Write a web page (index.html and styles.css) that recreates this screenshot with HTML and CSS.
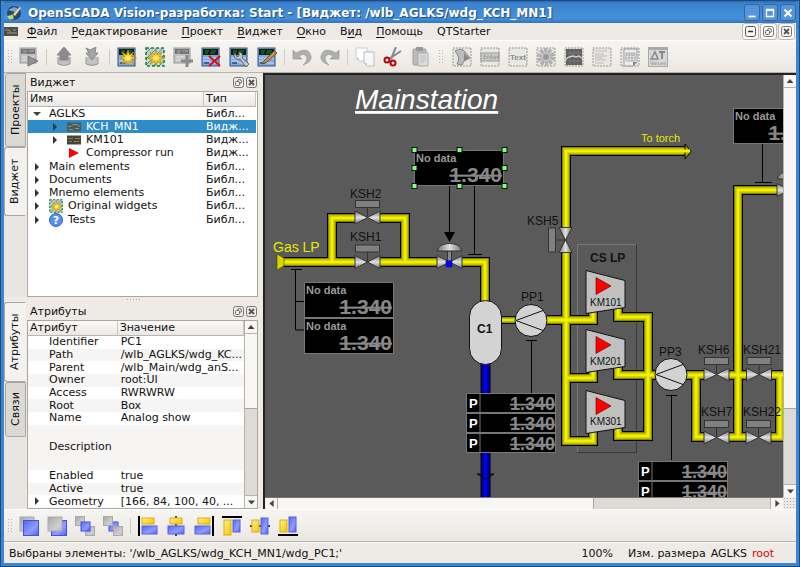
FILE: index.html
```
<!DOCTYPE html>
<html lang="ru">
<head>
  <meta charset="UTF-8">
  <meta name="viewport" content="width=device-width, initial-scale=1">
  <title>OpenSCADA Vision-разработка</title>
  <link rel="stylesheet" href="styles.css">
</head>
<body>

<svg class="defs" aria-hidden="true">
  <defs>
    <linearGradient id="metal" x1="0" y1="0" x2="0" y2="1">
      <stop offset="0" stop-color="#777"/><stop offset=".5" stop-color="#e0e0e0"/><stop offset="1" stop-color="#777"/>
    </linearGradient>
    <linearGradient id="metal-v" x1="0" y1="0" x2="1" y2="0">
      <stop offset="0" stop-color="#777"/><stop offset=".5" stop-color="#e0e0e0"/><stop offset="1" stop-color="#777"/>
    </linearGradient>
    <linearGradient id="gold" x1="0" y1="0" x2="1" y2="1">
      <stop offset="0" stop-color="#fff09a"/><stop offset="1" stop-color="#f5c400"/>
    </linearGradient>
    <linearGradient id="blue" x1="0" y1="0" x2="1" y2="1">
      <stop offset="0" stop-color="#5568f0"/><stop offset=".6" stop-color="#8f9cff"/><stop offset="1" stop-color="#5060ee"/>
    </linearGradient>
    <linearGradient id="silver" x1="0" y1="0" x2="1" y2="1">
      <stop offset="0" stop-color="#a9a9a9"/><stop offset=".7" stop-color="#cfcfcf"/><stop offset="1" stop-color="#b5b5b5"/>
    </linearGradient>
    <symbol id="panel" viewBox="0 0 20 20">
      <rect x="1" y="1" width="17" height="18" fill="#7fa8e4" stroke="#38507c"/>
      <rect x="2" y="2" width="15" height="6" fill="#10200f"/>
      <path d="M4 4h4M10 4h5M4 6h3M9 6h5" stroke="#1c8a25"/>
      <path d="M2 11h15M2 14h6l3 2h6" stroke="#c7dcfb" fill="none"/>
      <path d="M3 16h5" stroke="#46608c" stroke-width="2"/>
    </symbol>
    <symbol id="panel-off" viewBox="0 0 20 20">
      <rect x="1" y="1" width="16" height="15" fill="#c3c3c3" stroke="#999"/>
      <rect x="2" y="2" width="14" height="5" fill="#777"/>
      <path d="M4 4h4M10 4h5M4 6h3" stroke="#aaa"/>
      <path d="M3 10h12M3 13h12" stroke="#e5e5e5"/>
    </symbol>
    <symbol id="star" viewBox="0 0 20 20">
      <path d="M11 3l1.500 5 4-3-2 4.500 5 1.500-5 1.500 2 4.500-4-3-1.500 5-1.500-5-4.500 3 2.500-4.500-5-1.500 5-1.500-2.500-4.500 4.500 3z" fill="#ffd528" stroke="#bd8500" stroke-width=".8"/>
      <circle cx="11" cy="11" r="2" fill="#fff3a0"/>
    </symbol>
    <symbol id="library" viewBox="0 0 20 20">
      <rect x="1" y="1" width="18" height="18" fill="#b9d3d6"/>
      <path d="M1 6l5-5M1 12l11-11M1 18l17-17M8 19l11-11M14 19l5-5" stroke="#6b8b90"/>
      <rect x="1" y="1" width="18" height="18" fill="none" stroke="#19862a" stroke-width="1.600" stroke-dasharray="3 2"/>
      <use href="#star"/>
    </symbol>
    <symbol id="frame" viewBox="0 0 20 20">
      <rect x="1" y="1" width="18" height="18" fill="#e9e7e4" stroke="#999" stroke-dasharray="2 1"/>
    </symbol>
    <symbol id="float" viewBox="0 0 11 11">
      <rect x=".5" y=".5" width="10" height="10" rx="2" fill="none" stroke="#777"/>
      <circle cx="6.500" cy="4.500" r="2" fill="none" stroke="#666"/>
      <rect x="2.500" y="4.500" width="4" height="4" rx="1" fill="#eee" stroke="#666"/>
    </symbol>
    <symbol id="close" viewBox="0 0 11 11">
      <rect x=".5" y=".5" width="10" height="10" rx="2" fill="none" stroke="#777"/>
      <path d="M3 3l5 5M8 3l-5 5" stroke="#555" stroke-width="1.800"/>
    </symbol>
    <symbol id="open" viewBox="0 0 8 8"><path d="M0 2h8L4 6z" fill="#444"/></symbol>
    <symbol id="shut" viewBox="0 0 8 8"><path d="M2 0v8l4-4z" fill="#333"/></symbol>

    <!-- mnemo elements, origin in the middle of each -->
    <g id="bowtie" stroke="#333" stroke-width="1">
      <path d="M-12.500-6.500L0 0-12.500 6.500z" fill="url(#metal)"/>
      <path d="M12.500-6.500L0 0 12.500 6.500z" fill="url(#metal)"/>
    </g>
    <g id="valve">
      <path d="M0-10V0" stroke="#333"/>
      <rect x="-12" y="-17" width="24" height="7" fill="#808080" stroke="#333"/>
      <use href="#bowtie"/>
    </g>
    <g id="control-valve">
      <rect x="-2" y="-11" width="4" height="10" fill="#888" stroke="#333"/>
      <path d="M-12-11C-12-21 12-21 12-11z" fill="url(#metal-v)" stroke="#333"/>
      <use href="#bowtie"/>
    </g>
    <g id="pump">
      <circle r="16" fill="#d3d3d3" stroke="#111"/>
      <path d="M12-10L-15 0 12 10" fill="none" stroke="#111"/>
    </g>
    <g id="compressor">
      <path d="M0 0L39 10V37L0 43z" fill="#c0c0c0" stroke="#111"/>
      <path d="M10 7L25 15.500 10 24z" fill="red" stroke="#500" stroke-width=".6"/>
    </g>
    <g id="display">
      <rect x=".5" y=".5" width="89" height="35" fill="#000" stroke="#777"/>
      <text class="tag" x="2" y="12">No data</text>
      <text class="value" x="88" y="32">1.340</text>
    </g>
    <g id="channel">
      <rect x=".5" y=".5" width="89" height="19" fill="#000" stroke="#777"/>
      <path d="M14 0v20" stroke="#777"/>
      <text class="param" x="3" y="15">P</text>
      <text class="value small" x="89" y="17">1.340</text>
    </g>
    <rect id="handle" x="-2.500" y="-2.500" width="5" height="5" fill="#80ff80" stroke="#111"/>
    <path id="gas" fill="none" d="M280 262H355M380 262H438M332 262V218H355M380 218H405V262M462 262H485V301
      M547 320H593V312M566 228V151H686M566 252V441H593V430M566 378H593V369
      M618 308V317H648V436H618V427M618 366V375H656M686 375H704M696 375V437H704
      M729 375H747M729 437H747M738 437V190H778M771 375H790M771 437H780V375"/>
  </defs>
</svg>

<div class="window">
  <header class="titlebar">
    <svg class="app-icon" viewBox="0 0 16 16"><circle cx="8" cy="8" r="7" fill="#294766"/><path d="M2 5l6-3 5 2-4 3z" fill="#7ca6d0"/><path d="M3 13l3-4 2 2-3 4z" fill="#8acb3c"/><path d="M7 9l7-7 1 1-6 8z" fill="#f0d7a0"/><path d="M1 11l5-1 2 4H3z" fill="#c6dc6a"/></svg>
    <h1>OpenSCADA Vision-разработка: Start - [Виджет: /wlb_AGLKS/wdg_KCH_MN1]</h1>
    <button class="wm" aria-label="Свернуть"><svg viewBox="0 0 16 16"><path d="M4 12h8" stroke="#fff" stroke-width="2"/></svg></button>
    <button class="wm" aria-label="Развернуть"><svg viewBox="0 0 16 16"><path d="M4 4h8v8H4zM4 5h8" stroke="#fff" stroke-width="1.500" fill="none"/></svg></button>
    <button class="wm" aria-label="Закрыть"><svg viewBox="0 0 16 16"><path d="M4 4l8 8M12 4l-8 8" stroke="#fff" stroke-width="2.200"/></svg></button>
  </header>

  <nav class="menubar">
    <svg class="doc-icon" viewBox="0 0 14 9"><rect width="14" height="9" fill="#4a4d48"/><path d="M1 3h4l2 3h6M3 6h3M9 3h3" stroke="#a0a06a" fill="none"/></svg>
    <button><u>Ф</u>айл</button>
    <button><u>Р</u>едактирование</button>
    <button><u>П</u>роект</button>
    <button><u>В</u>иджет</button>
    <button><u>О</u>кно</button>
    <button>В<u>и</u>д</button>
    <button><u>П</u>омощь</button>
    <button>QTStarter</button>
    <span class="mdi">
      <button aria-label="Свернуть виджет"><svg viewBox="0 0 11 11"><rect x=".5" y=".5" width="10" height="10" rx="2" fill="none" stroke="#555"/><path d="M3 5.500h5" stroke="#333" stroke-width="1.500"/></svg></button>
      <button aria-label="Восстановить виджет"><svg><use href="#float"/></svg></button>
      <button aria-label="Закрыть виджет"><svg><use href="#close"/></svg></button>
    </span>
  </nav>

  <div class="toolbar top">
    <span class="grip"></span>
    <button aria-label="Исполнение"><svg viewBox="0 0 20 20"><use href="#panel-off"/><path d="M9 9l10 5-10 5z" fill="#929292" stroke="#777"/></svg></button>
    <span class="sep"></span>
    <button aria-label="Загрузить"><svg viewBox="0 0 20 20"><path d="M4 10v7q6 3 12 0v-7" fill="#c2c2c2" stroke="#999"/><path d="M10 0l7 8h-3v5H6V8H3z" fill="#8b8b8b" stroke="#888"/></svg></button>
    <button aria-label="Сохранить"><svg viewBox="0 0 20 20"><path d="M4 10v7q6 3 12 0v-7" fill="#c2c2c2" stroke="#999"/><path d="M4 1l4 2 6-3-1 6h3l-6 7-6-7h3z" fill="#a5a5a5" stroke="#888"/></svg></button>
    <span class="sep"></span>
    <button aria-label="Новая библиотека"><svg viewBox="0 0 20 20"><use href="#panel"/><use href="#star"/></svg></button>
    <button aria-label="Добавить библиотеку"><svg><use href="#library"/></svg></button>
    <button aria-label="Добавить виджет"><svg viewBox="0 0 20 20"><use href="#panel-off"/><path d="M14 8v12M8 14h12" stroke="#8a8a8a" stroke-width="3"/></svg></button>
    <button aria-label="Удалить виджет"><svg viewBox="0 0 20 20"><use href="#panel"/><path d="M8 9l11 10M19 9L8 19" stroke="#d90f0f" stroke-width="2"/></svg></button>
    <button aria-label="Свойства"><svg viewBox="0 0 20 20"><use href="#panel"/><path d="M6 6a4 4 0 0 0 5 6l6 8 3-3-7-6a4 4 0 0 0-3-6v4l-2 1z" fill="#c6c9cd" stroke="#666"/></svg></button>
    <button aria-label="Редактировать"><svg viewBox="0 0 20 20"><use href="#panel"/><path d="M6 15l11-11 3 2-10 9-5 2z" fill="#c78e4c" stroke="#704c22"/></svg></button>
    <span class="sep"></span>
    <button aria-label="Отменить"><svg viewBox="0 0 20 20"><path d="M1 3v9h9L7 9q6-4 8 2 0 4-4 7 9-3 8-9Q16-1 4 6z" fill="#b0b0b0" stroke="#999" stroke-width=".7"/></svg></button>
    <button aria-label="Повторить"><svg viewBox="0 0 20 20"><path d="M19 3v9h-9l3-3q-6-4-8 2 0 4 4 7-9-3-8-9Q4-1 16 6z" fill="#b0b0b0" stroke="#999" stroke-width=".7"/></svg></button>
    <span class="sep"></span>
    <button aria-label="Копировать"><svg viewBox="0 0 20 20"><path d="M1 1h11v13H4l-3-3z" fill="#fff" stroke="#ccc"/><path d="M9 5h10v14h-7l-3-3z" fill="#f8f8fa" stroke="#bbb"/><path d="M1 11l3 3v-3zM9 16l3 3v-3z" fill="#c8c8d4"/></svg></button>
    <button aria-label="Вырезать"><svg viewBox="0 0 20 20"><path d="M13 0L8 12M18 4L6 12" stroke="#888" stroke-width="2"/><circle cx="4" cy="13" r="2.500" fill="none" stroke="#c3000a" stroke-width="2"/><circle cx="10" cy="16" r="2.500" fill="none" stroke="#c3000a" stroke-width="2"/></svg></button>
    <button aria-label="Вставить"><svg viewBox="0 0 20 20"><rect x="2" y="2" width="13" height="16" rx="1" fill="#bbb" stroke="#a0a0a0"/><rect x="5" y="0" width="7" height="4" fill="#999"/><path d="M7 6h10v13H7z" fill="#ddd" stroke="#aaa"/><path d="M9 9h6M9 11h6M9 13h6M9 15h4" stroke="#bbb"/></svg></button>
    <span class="grip"></span>
    <button aria-label="Элементарная фигура"><svg viewBox="0 0 20 20"><use href="#frame"/><path d="M3 4q7-4 10 1l5 6-6 3-2 4-5-1q4-6-2-13z" fill="#bbb" stroke="#888"/><path d="M12 6l5 5-5 3z" fill="#888"/></svg></button>
    <button aria-label="Элемент формы"><svg viewBox="0 0 20 20"><use href="#frame"/><rect x="1" y="6" width="18" height="8" fill="#ccc" stroke="#999"/><text class="glyph" x="3" y="12">Enter</text></svg></button>
    <button aria-label="Текст"><svg viewBox="0 0 20 20"><use href="#frame"/><text class="glyph big" x="2" y="13">Text</text></svg></button>
    <button aria-label="Медиа"><svg viewBox="0 0 20 20"><use href="#frame"/><circle cx="10" cy="10" r="6.500" fill="#ccc" stroke="#b0b0b0" stroke-width="5" stroke-dasharray="3 1"/><circle cx="10" cy="10" r="3" fill="#999"/></svg></button>
    <button aria-label="Диаграмма"><svg viewBox="0 0 20 20"><use href="#frame"/><rect x="2" y="2" width="16" height="16" fill="#5e5e5e"/><path d="M6 2v16M10 2v16M14 2v16M2 6h16M2 14h16" stroke="#777"/><path d="M1 13l4-3 4-1 3 1 3-1 4 3" fill="none" stroke="#ccc" stroke-width="1.500"/></svg></button>
    <button aria-label="Протокол"><svg viewBox="0 0 20 20"><use href="#frame"/><path d="M3 4h12M3 7h9M3 9h12M3 11h8M3 13h11M3 16h9" stroke="#bbb"/></svg></button>
    <button aria-label="Документ"><svg viewBox="0 0 20 20"><use href="#frame"/><path d="M4 2h13v13l-4 4H4z" fill="#eee" stroke="#999"/><path d="M6 6h9v8H6zM6 8h9M6 11h9M9 6v8M12 6v8" fill="none" stroke="#aaa"/><path d="M13 19v-4h4z" fill="#888"/></svg></button>
    <button aria-label="Значение"><svg viewBox="0 0 20 20"><rect x=".5" y=".5" width="19" height="19" fill="#d8d8d8" stroke="#aaa"/><path d="M1 2h18" stroke="#aaa" stroke-width="2"/><path d="M3 12l4-7 3 7z" fill="none" stroke="#888" stroke-width="1.500"/><path d="M11 5h6M14 5v7" stroke="#888" stroke-width="2"/><text class="glyph tiny" x="2" y="18">Values</text></svg></button>
  </div>

  <main class="workspace">
    <aside class="docks">
      <section class="dock widgets">
        <div class="tabs" role="tablist">
          <button class="tab projects" role="tab" aria-selected="false">Проекты</button>
          <button class="tab lib active" role="tab" aria-selected="true">Виджет</button>
        </div>
        <div class="pane">
          <div class="pane-title">
            <h2>Виджет</h2>
            <button aria-label="Открепить"><svg><use href="#float"/></svg></button>
            <button aria-label="Закрыть панель"><svg><use href="#close"/></svg></button>
          </div>
          <div class="view">
            <table class="tree">
              <thead><tr><th>Имя</th><th class="type">Тип</th></tr></thead>
              <tbody>
                <tr><td><svg class="twist"><use href="#open"/></svg>AGLKS</td><td>Библ...</td></tr>
                <tr class="selected"><td class="child"><svg class="twist"><use href="#shut"/></svg><svg class="thumb" viewBox="0 0 14 9"><rect width="14" height="9" fill="#4e5a58"/><path d="M1 4h3l2-2h4l3 2M2 7h4M8 6h4" stroke="#7e9a88" fill="none"/></svg>KCH_MN1</td><td>Видж...</td></tr>
                <tr><td class="child"><svg class="twist"><use href="#shut"/></svg><svg class="thumb" viewBox="0 0 14 9"><rect width="14" height="9" fill="#44443c"/><path d="M1 3h5M8 3h5M2 6h3M7 6h5" stroke="#8b7f3c" fill="none"/></svg>KM101</td><td>Видж...</td></tr>
                <tr class="tall"><td class="child"><span class="twist"></span><svg class="thumb" viewBox="0 0 14 12"><path d="M2 1l10 5-10 5z" fill="red"/></svg>Compressor run</td><td>Видж...</td></tr>
                <tr><td><svg class="twist"><use href="#shut"/></svg>Main elements</td><td>Библ...</td></tr>
                <tr><td><svg class="twist"><use href="#shut"/></svg>Documents</td><td>Библ...</td></tr>
                <tr><td><svg class="twist"><use href="#shut"/></svg>Mnemo elements</td><td>Библ...</td></tr>
                <tr class="tall"><td><svg class="twist"><use href="#shut"/></svg><svg class="thumb"><use href="#library"/></svg>Original widgets</td><td>Библ...</td></tr>
                <tr class="tall"><td><svg class="twist"><use href="#shut"/></svg><svg class="thumb" viewBox="0 0 14 14"><circle cx="7" cy="7" r="6.500" fill="#5a8df0" stroke="#2b5fd0"/><text class="help" x="7" y="11">?</text></svg>Tests</td><td>Библ...</td></tr>
              </tbody>
            </table>
          </div>
        </div>
      </section>

      <div class="splitter"></div>

      <section class="dock attrs">
        <div class="tabs" role="tablist">
          <button class="tab attributes active" role="tab" aria-selected="true">Атрибуты</button>
          <button class="tab links" role="tab" aria-selected="false">Связи</button>
        </div>
        <div class="pane">
          <div class="pane-title">
            <h2>Атрибуты</h2>
            <button aria-label="Открепить"><svg><use href="#float"/></svg></button>
            <button aria-label="Закрыть панель"><svg><use href="#close"/></svg></button>
          </div>
          <div class="view scrolled">
            <table class="props">
              <thead><tr><th class="name">Атрибут</th><th>Значение</th></tr></thead>
              <tbody>
                <tr><td>Identifier</td><td>PC1</td></tr>
                <tr><td>Path</td><td>/wlb_AGLKS/wdg_KC...</td></tr>
                <tr><td>Parent</td><td>/wlb_Main/wdg_anS...</td></tr>
                <tr><td>Owner</td><td>root:UI</td></tr>
                <tr><td>Access</td><td>RWRWRW</td></tr>
                <tr><td>Root</td><td>Box</td></tr>
                <tr><td>Name</td><td>Analog show</td></tr>
                <tr class="text"><td>Description</td><td></td></tr>
                <tr><td>Enabled</td><td>true</td></tr>
                <tr><td>Active</td><td>true</td></tr>
                <tr><td class="group"><svg class="twist"><use href="#shut"/></svg>Geometry</td><td>[166, 84, 100, 40, ...</td></tr>
              </tbody>
            </table>
            <div class="scroll vertical">
              <span class="arrow up"></span><span class="thumb-bar"></span><span class="arrow down"></span>
            </div>
          </div>
        </div>
      </section>
    </aside>

    <section class="editor">
      <svg class="mnemo" role="img" aria-label="Mainstation">
        <g transform="translate(-265 -75)">
          <rect x="577.500" y="244.500" width="59" height="208" fill="none" stroke="#3a3a3a"/>
          <path d="M577.500 452V244.500H636" fill="none" stroke="#777"/>

          <g fill="none" stroke="#000">
            <path d="M449.500 186v48M474.500 186v68M468 254.500h14M291 269.500h11M295.500 269v61h9M295.500 301.500h9"/>
            <path d="M526 340.500h11M531.500 340v53M666 395.500h11M671.500 395v65M762.500 143v39M755 182.500h17"/>
          </g>
          <path d="M444 232h11l-5.500 10z"/>

          <g class="blue-pipe">
            <path d="M485.500 360V500" stroke="#000" stroke-width="10"/>
            <path d="M485.500 360V500" stroke="#0000a0" stroke-width="8"/>
            <path d="M485.500 360V500" stroke="#0000f0" stroke-width="3"/>
            <path d="M477 474h4M490 474h4l-8.500 5-8-5" fill="none" stroke="#000"/>
          </g>

          <g fill="none">
            <path d="M500 320H518" stroke="#000" stroke-width="8"/>
            <path d="M500 320H518" stroke="#909000" stroke-width="6"/>
            <path d="M500 320H518" stroke="#e8e800" stroke-width="3"/>
          </g>
          <use href="#gas" stroke="#000" stroke-width="10"/>
          <use href="#gas" stroke="#878700" stroke-width="8"/>
          <use href="#gas" stroke="#c0c000" stroke-width="6"/>
          <use href="#gas" stroke="#f0f000" stroke-width="3"/>
          <path d="M277 254l7 4v8l-7 4z" fill="#d5d500" stroke="#444400" stroke-width=".6"/>
          <path d="M685 144l6 7.500-6 7.500z" fill="#a8a800" stroke="#000"/>
          <path d="M684 151h6" stroke="#f0f000" stroke-width="3"/>

          <use href="#valve" x="367.500" y="217.500"/>
          <use href="#valve" x="367.500" y="262"/>
          <use href="#valve" x="716.500" y="374.500"/>
          <use href="#valve" x="759" y="374.500"/>
          <use href="#valve" x="716.500" y="437.500"/>
          <use href="#valve" x="758.500" y="437.500"/>
          <use href="#valve" transform="translate(565.500 240) rotate(-90)"/>
          <use href="#control-valve" x="449.500" y="262"/>
          <use href="#control-valve" x="789.500" y="190"/>
          <rect x="446" y="261" width="6" height="6" fill="#00f" stroke="#000080" stroke-width=".5"/>

          <rect x="469.500" y="300.500" width="32" height="64" rx="16" fill="#d3d3d3" stroke="#111"/>
          <use href="#pump" x="531" y="320.500"/>
          <use href="#pump" x="671" y="374.500"/>
          <use href="#compressor" x="586" y="270.500"/>
          <use href="#compressor" x="586" y="329.500"/>
          <use href="#compressor" x="586" y="390.500"/>

          <use href="#display" x="414" y="150"/>
          <use href="#display" x="304" y="282"/>
          <use href="#display" x="304" y="318"/>
          <use href="#display" x="733" y="108"/>
          <use href="#channel" x="466" y="393"/>
          <use href="#channel" x="466" y="413"/>
          <use href="#channel" x="466" y="433"/>
          <use href="#channel" x="638" y="461"/>
          <use href="#channel" x="638" y="481"/>

          <use href="#handle" x="414.500" y="150"/>
          <use href="#handle" x="459.500" y="150"/>
          <use href="#handle" x="504.500" y="150"/>
          <use href="#handle" x="414.500" y="168"/>
          <use href="#handle" x="504.500" y="168"/>
          <use href="#handle" x="414.500" y="186"/>
          <use href="#handle" x="459.500" y="186"/>
          <use href="#handle" x="504.500" y="186"/>

          <text class="heading" x="355" y="109">Mainstation</text>
          <text class="flow large" x="273" y="252">Gas LP</text>
          <text class="flow" x="641" y="142">To torch</text>
          <text x="350" y="198">KSH2</text>
          <text x="350" y="241">KSH1</text>
          <text x="527" y="225">KSH5</text>
          <text x="521" y="301">PP1</text>
          <text x="659" y="356">PP3</text>
          <text x="698" y="354">KSH6</text>
          <text x="743" y="354">KSH21</text>
          <text x="701" y="416">KSH7</text>
          <text x="743" y="416">KSH22</text>
          <text class="strong" x="590" y="262">CS LP</text>
          <text class="strong" x="477" y="333">C1</text>
          <text class="unit" x="590" y="306">KM101</text>
          <text class="unit" x="590" y="365">KM201</text>
          <text class="unit" x="590" y="425">KM301</text>
        </g>
      </svg>
      <div class="scroll vertical"><span class="arrow up"></span><span class="thumb-bar"></span><span class="arrow down"></span></div>
      <div class="scroll horizontal"><span class="arrow left"></span><span class="thumb-bar"></span><span class="arrow right"></span></div>
      <div class="corner"></div>
    </section>
  </main>

  <div class="toolbar bottom">
    <span class="grip"></span>
    <button aria-label="Поднять наверх"><svg viewBox="0 0 20 20"><rect x="1" y="1" width="14" height="14" fill="url(#silver)" stroke="#aaa"/><rect x="4.500" y="4.500" width="15" height="15" fill="url(#blue)" stroke="#4050e8"/></svg></button>
    <button aria-label="Опустить вниз"><svg viewBox="0 0 20 20"><rect x="4.500" y="4.500" width="15" height="15" fill="url(#blue)" stroke="#4050e8"/><rect x="1" y="1" width="14" height="14" fill="url(#silver)" stroke="#aaa"/></svg></button>
    <button aria-label="Поднять"><svg viewBox="0 0 20 20"><rect x=".5" y=".5" width="9" height="9" fill="url(#silver)" stroke="#aaa"/><rect x="10.500" y="10.500" width="9" height="9" fill="url(#silver)" stroke="#aaa"/><rect x="6" y="6" width="9" height="9" fill="url(#blue)" stroke="#4050e8"/></svg></button>
    <button aria-label="Опустить"><svg viewBox="0 0 20 20"><rect x="6" y="6" width="9" height="9" fill="url(#blue)" stroke="#4050e8"/><rect x=".5" y=".5" width="9" height="9" fill="url(#silver)" stroke="#aaa"/><rect x="10.500" y="10.500" width="9" height="9" fill="url(#silver)" stroke="#aaa"/></svg></button>
    <span class="sep"></span>
    <button aria-label="Выровнять слева"><svg viewBox="0 0 20 20"><path d="M1 0v20" stroke="#000" stroke-width="2"/><rect x="4" y="2" width="12" height="6" fill="url(#gold)" stroke="#e0ad00"/><rect x="4" y="10" width="15" height="8" fill="url(#blue)" stroke="#4f60ee"/></svg></button>
    <button aria-label="Выровнять по центру вертикально"><svg viewBox="0 0 20 20"><path d="M10 0v20" stroke="#000" stroke-width="1.500"/><rect x="4" y="2" width="12" height="6" fill="url(#gold)" stroke="#e0ad00"/><rect x="2" y="10" width="16" height="8" fill="url(#blue)" stroke="#4f60ee"/></svg></button>
    <button aria-label="Выровнять справа"><svg viewBox="0 0 20 20"><path d="M19 0v20" stroke="#000" stroke-width="2"/><rect x="4" y="2" width="12" height="6" fill="url(#gold)" stroke="#e0ad00"/><rect x="1" y="10" width="15" height="8" fill="url(#blue)" stroke="#4f60ee"/></svg></button>
    <button aria-label="Выровнять сверху"><svg viewBox="0 0 20 20"><path d="M0 1h20" stroke="#000" stroke-width="2"/><rect x="2" y="4" width="7" height="15" fill="url(#gold)" stroke="#e0ad00"/><rect x="11" y="4" width="7" height="12" fill="url(#blue)" stroke="#4f60ee"/></svg></button>
    <button aria-label="Выровнять по центру горизонтально"><svg viewBox="0 0 20 20"><path d="M0 10h20" stroke="#000" stroke-width="1.500"/><rect x="2" y="4" width="7" height="12" fill="url(#gold)" stroke="#e0ad00"/><rect x="11" y="2" width="7" height="16" fill="url(#blue)" stroke="#4f60ee"/></svg></button>
    <button aria-label="Выровнять снизу"><svg viewBox="0 0 20 20"><path d="M0 19h20" stroke="#000" stroke-width="2"/><rect x="2" y="4" width="7" height="12" fill="url(#gold)" stroke="#e0ad00"/><rect x="11" y="1" width="7" height="15" fill="url(#blue)" stroke="#4f60ee"/></svg></button>
  </div>

  <footer class="statusbar">
    <span class="message">Выбраны элементы: '/wlb_AGLKS/wdg_KCH_MN1/wdg_PC1;'</span>
    <span class="zoom">100%</span>
    <span>Изм. размера</span>
    <span>AGLKS</span>
    <span class="user">root</span>
  </footer>
</div>

</body>
</html>
```
FILE: styles.css
```
*, *:after, *:before {
  box-sizing: border-box;
}
body {
  margin: 0;
  color: #111;
  font-family: "DejaVu Sans", sans-serif;
  font-size: 11px;
}
button {
  background: none;
  border: 0;
  color: inherit;
  font: inherit;
  margin: 0;
  padding: 0;
}
svg {
  display: block;
}
h1, h2 {
  font-size: 11px;
  margin: 0;
}
.defs {
  height: 0;
  position: absolute;
  width: 0;
}
.window {
  background: #eeebe7;
  border: 4px solid #3d85cf;
  border-top: 0;
  display: flex;
  flex-direction: column;
  height: 100vh;
  outline: 1px solid #1d4b80;
  outline-offset: -1px;
}

/* title and menu */
.titlebar {
  align-items: center;
  background: linear-gradient(#2a62a5, #3c82cc 15%, #4490dc 80%, #3574b8);
  color: #fff;
  display: flex;
  flex: none;
  gap: 2px;
  height: 23px;
  padding: 2px 0 0 2px;
}
.titlebar h1 {
  flex: 1;
  font-size: 12px;
  overflow: hidden;
  padding-left: 4px;
  text-shadow: 1px 1px 1px #1c4679;
  white-space: nowrap;
}
.app-icon {
  height: 16px;
  width: 16px;
}
.wm {
  background: #5795d8;
  border: 1px solid #2f68a8;
  border-radius: 3px;
  height: 17px;
  width: 16px;
}
.menubar {
  align-items: center;
  display: flex;
  flex: none;
  gap: 14px;
  height: 17px;
}
.doc-icon {
  height: 9px;
  margin-right: -5px;
  width: 14px;
}
.menubar u {
  text-underline-offset: 2px;
}
.mdi {
  display: flex;
  gap: 1px;
  margin-left: auto;
  padding-right: 1px;
}
.mdi button {
  background: #faf9f7;
  border: 1px solid #bdb9b4;
  border-radius: 3px;
  display: grid;
  height: 17px;
  place-items: center;
  width: 17px;
}
.mdi svg, .pane-title svg {
  height: 11px;
  width: 11px;
}

/* toolbars */
.toolbar {
  align-items: center;
  background: linear-gradient(#f7f5f2, #ebe8e3);
  border-bottom: 1px solid #b5b1ab;
  border-top: 1px solid #fff;
  display: flex;
  flex: none;
  height: 33px;
}
.toolbar button {
  display: grid;
  height: 28px;
  place-items: center;
  width: 28px;
}
.toolbar svg {
  height: 20px;
  width: 20px;
}
.toolbar .sep {
  border-left: 1px solid #cfcbc5;
  height: 16px;
  margin: 0 3px;
}
.toolbar .grip {
  background: radial-gradient(#b9b5af 1px, transparent 1px) 0 0 / 3px 3px;
  height: 16px;
  margin: 0 3px;
  width: 5px;
}
.toolbar.top .grip:not(:first-child) {
  margin: 0 5px 0 3px;
}
.glyph {
  fill: #888;
  font-size: 6px;
}
.glyph.big {
  font: bold 8px "Liberation Sans", sans-serif;
}
.glyph.tiny {
  font-size: 5px;
}

/* docks */
.workspace {
  display: flex;
  flex: 1;
  min-height: 0;
}
.docks {
  display: flex;
  flex: 0 0 259px;
  flex-direction: column;
}
.dock {
  display: flex;
  min-height: 0;
}
.widgets {
  flex: 224;
}
.attrs {
  flex: 207;
}
.splitter {
  display: grid;
  flex: none;
  height: 5px;
  place-items: center;
}
.splitter:after {
  background: radial-gradient(#aaa 1px, transparent 1px) 0 0 / 3px 3px;
  content: "";
  height: 3px;
  width: 15px;
}
.tabs {
  background: #e9e6e2;
  display: flex;
  flex: none;
  flex-direction: column;
  width: 22px;
}
.tab {
  background: #dcd9d5;
  border: 1px solid #aaa6a1;
  border-radius: 0 3px 3px 0;
  line-height: 20px;
  margin-left: 1px;
  transform: rotate(180deg);
  writing-mode: vertical-rl;
}
.tab.active {
  background: #f4f2ef;
  border-left-color: #f4f2ef;
  margin-left: 0;
}
.projects {
  height: 74px;
}
.lib {
  height: 69px;
}
.attributes {
  height: 80px;
}
.links {
  height: 55px;
}
.pane {
  display: flex;
  flex: 1;
  flex-direction: column;
  min-width: 0;
  padding: 0 5px 0 1px;
}
.pane-title {
  align-items: center;
  display: flex;
  flex: none;
  gap: 2px;
  height: 18px;
  padding: 0 1px 0 3px;
}
.pane-title h2 {
  flex: 1;
  font-weight: normal;
}
.view {
  background: #fff;
  border: 1px solid #aaa6a1;
  display: flex;
  flex: 1;
  min-height: 0;
  overflow: hidden;
}
.view table {
  border-spacing: 0;
  flex: 1;
  min-width: 0;
  table-layout: fixed;
}
th {
  background: linear-gradient(#fbfaf9, #ebe8e4);
  border-bottom: 1px solid #b9b5b0;
  border-right: 1px solid #c9c5c0;
  font-weight: normal;
  height: 15px;
  line-height: 14px;
  padding: 0 2px;
  text-align: left;
}
td {
  line-height: 12px;
  overflow: hidden;
  padding: 0 2px;
  white-space: nowrap;
}
.tree {
  align-self: flex-start;
  margin-right: 1px;
}
.tree .type {
  width: 52px;
}
.tree td {
  height: 13px;
}
.tree .tall td {
  height: 14px;
}
.tree td:first-child {
  align-items: center;
  display: flex;
  padding-left: 5px;
}
.tree td.child {
  padding-left: 23px;
}
.tree .selected {
  background: #308cc6;
  color: #fff;
}
.twist {
  flex: none;
  height: 8px;
  margin-right: 8px;
  width: 8px;
}
.thumb {
  height: 14px;
  margin-right: 5px;
  width: 14px;
}
.child .thumb {
  height: 12px;
}
.help {
  fill: #fff;
  font: bold 11px "DejaVu Sans", sans-serif;
  text-anchor: middle;
}
.props {
  height: 100%;
}
.props .name {
  width: 90px;
}
.props td:first-child {
  padding-left: 21px;
}
.props td.group {
  padding-left: 5px;
}
.props td .twist {
  display: inline-block;
}
.props tr:nth-child(even) td {
  background: #f6f5f4;
}
.props td:last-child {
  padding-left: 3px;
}
.props .text td {
  height: 45px;
}

/* scroll bars */
.scroll {
  background: #dedbd6;
  display: flex;
  flex: none;
}
.vertical {
  border-left: 1px solid #b5b1ab;
  flex-direction: column;
  width: 13px;
}
.horizontal {
  border-top: 1px solid #77736e;
  height: 12px;
}
.thumb-bar {
  background: #f7f6f4;
  border: 0 solid #aaa6a1;
}
.vertical .thumb-bar {
  border-bottom-width: 1px;
}
.horizontal .thumb-bar {
  border-right-width: 1px;
}
.arrow {
  background: #f7f6f4;
  border: 0 solid #b5b1ab;
  display: grid;
  flex: 0 0 13px;
  place-items: center;
}
.arrow:after {
  background: #444;
  clip-path: polygon(50% 20%, 100% 80%, 0 80%);
  content: "";
  height: 7px;
  width: 7px;
}
.up {
  border-bottom-width: 1px;
}
.down {
  border-top-width: 1px;
  margin-top: auto;
}
.left {
  border-right-width: 1px;
}
.right {
  border-left-width: 1px;
  margin-left: auto;
}
.down:after {
  transform: rotate(180deg);
}
.left:after {
  transform: rotate(-90deg);
}
.right:after {
  transform: rotate(90deg);
}
.attrs .thumb-bar {
  flex: 0 0 40%;
}
.editor .vertical .thumb-bar {
  flex: 0 0 76%;
}
.editor .horizontal .thumb-bar {
  flex: 0 0 61%;
}

/* widget editor */
.editor {
  border-left: 2px solid #222;
  border-top: 2px solid #222;
  display: grid;
  flex: 1;
  grid-template: 1fr 12px / 1fr 13px;
  min-width: 0;
}
.mnemo {
  background: #5a5a5a;
  font: 12px "Liberation Sans", Arial, sans-serif;
  height: 100%;
  min-height: 0;
  overflow: hidden;
  width: 100%;
}
.mnemo text {
  fill: #111;
}
.mnemo .heading {
  fill: #fff;
  font-size: 28px;
  font-style: italic;
  text-decoration: underline;
}
.mnemo .flow {
  fill: #e8e800;
  font-size: 11px;
}
.mnemo .large {
  font-size: 14px;
}
.mnemo .strong {
  font-weight: bold;
}
.mnemo .unit {
  font-size: 10px;
}
.tag {
  fill: #999;
  font-size: 11px;
  font-weight: bold;
}
.value {
  fill: #888;
  font-size: 21px;
  font-weight: bold;
  text-anchor: end;
  text-decoration: line-through;
}
.value.small {
  font-size: 18px;
}
.param {
  fill: #fff;
  font-size: 13px;
  font-weight: bold;
}
.corner {
  background: radial-gradient(#aaa 1px, #eeebe7 1px) 0 0 / 3px 3px;
}

/* status */
.statusbar {
  align-items: center;
  border-top: 1px solid #fff;
  display: flex;
  flex: none;
  gap: 5px;
  height: 21px;
  padding: 0 22px 0 5px;
}
.message {
  flex: 1;
}
.zoom {
  margin-right: 10px;
}
.user {
  color: #e00000;
}
```
